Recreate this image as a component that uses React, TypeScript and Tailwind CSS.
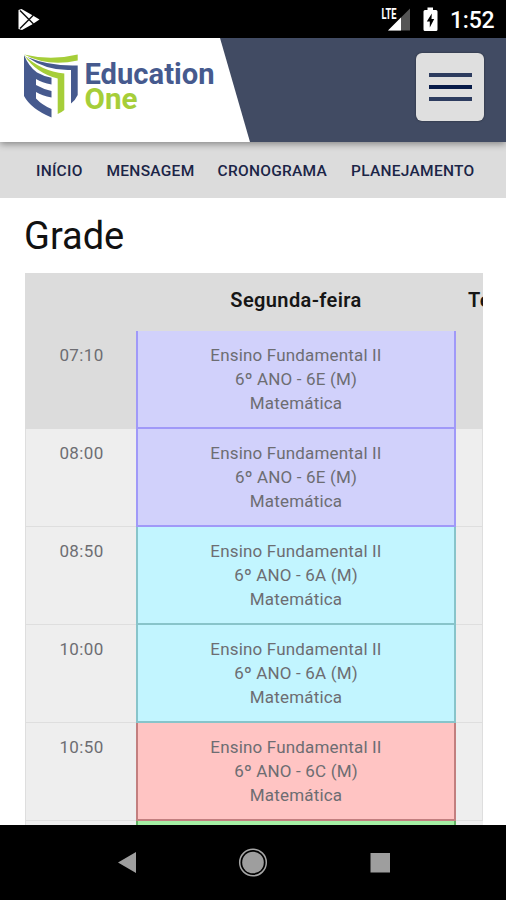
import React from "react";

type Lesson = { time: string; group: string; timeCell: string; cell: string };

const lessons: Lesson[] = [
  { time: "07:10", group: "6º ANO - 6E (M)", timeCell: "bg-[#dcdcdc] border-[#dcdcdc]", cell: "bg-[#d1d1fb] border-[#a099f8]" },
  { time: "08:00", group: "6º ANO - 6E (M)", timeCell: "bg-[#eeeeee] border-[#dedede]", cell: "bg-[#d1d1fb] border-[#a099f8]" },
  { time: "08:50", group: "6º ANO - 6A (M)", timeCell: "bg-[#eeeeee] border-[#dedede]", cell: "bg-[#c2f5ff] border-[#88c4ca]" },
  { time: "10:00", group: "6º ANO - 6A (M)", timeCell: "bg-[#eeeeee] border-[#dedede]", cell: "bg-[#c2f5ff] border-[#88c4ca]" },
  { time: "10:50", group: "6º ANO - 6C (M)", timeCell: "bg-[#eeeeee] border-[#dedede]", cell: "bg-[#ffc4c3] border-[#c27f7f]" },
];

function StatusBar() {
  return (
    <div className="flex h-[38px] items-center justify-between bg-black pr-[12px] pl-[17px]">
      <svg width="24" height="24" viewBox="0 0 24 24" className="mt-px">
        <path d="M1.5 2 L4.5 1 L15 7 L22.5 11.500 L15 16.500 L5 22 L1.5 21Z" fill="#fff" />
        <path d="M3 2.500 L16.500 16 M3 20.500 L16.500 7" stroke="#111" strokeWidth="1.5" />
      </svg>
      <div className="flex items-center">
        <svg width="30" height="26" viewBox="0 0 30 26" className="mt-px mr-[12px]">
          <path d="M7 23.5 L29 1.5 V23.5Z" fill="#555" />
          <path d="M7 23.5 L20 10.5 V23.5Z" fill="#fff" />
          <path d="M0 0 H16.500 V12.500 H0Z" fill="#000" />
          <text x="0.5" y="11.5" textLength="15" lengthAdjust="spacingAndGlyphs" fill="#fff" fontSize="14" fontWeight="700" fontFamily="Roboto, sans-serif">LTE</text>
        </svg>
        <svg width="15" height="25" viewBox="0 0 15 25" className="mt-px mr-[12px]">
          <path d="M4.5 0.5 H10 V3 H13 Q14.5 3 14.5 4.5 V22.5 Q14.5 24 13 24 H2 Q0.5 24 0.5 22.5 V4.5 Q0.5 3 2 3 H4.5Z" fill="#fff" />
          <path d="M8.8 6.5 L3.8 14.5 H6.8 V20.5 L11.2 12 H8.5Z" fill="#000" />
        </svg>
        <span className="mt-[3px] w-[44px] text-[23px] leading-[26px] font-medium tracking-[-0.2px] whitespace-nowrap text-white">1:52</span>
      </div>
    </div>
  );
}

function Logo() {
  return (
    <svg width="250" height="104" viewBox="0 38 250 104">
      <path d="M0 38 H220 L250 142 H0Z" fill="#fff" />
      <path d="M24 55 Q29 67 37 72.500 Q43 76 51.500 77.800 V84.500 Q42 82.500 36 79 V85 Q43 89 51.500 91 V97.500 Q42 95.500 36 92 V98.500 Q42 105 51.500 109 V117.500 Q31 109 24 96Z" fill="#465a8e" />
      <path d="M27 57 Q50 66.500 77.700 65.500 V95 Q75.500 100 71 103.500 V70 Q47 71 27 57Z" fill="#465a8e" />
      <path d="M24.500 55.500 Q41 71 64.300 73.500 V110 Q61.500 112.500 57.700 114 V78.500 Q36 73 24.500 55.500Z" fill="#a6ce39" />
      <path d="M24 54.500 Q51 61 77.700 54.500 V60.500 Q48 67 24 54.500Z" fill="#a6ce39" />
      <text x="84.500" y="84" textLength="130" lengthAdjust="spacingAndGlyphs" fontSize="30" fontWeight="700" fontFamily="Roboto, sans-serif" fill="#465a8e">Education</text>
      <text x="84.500" y="109.300" textLength="53" lengthAdjust="spacingAndGlyphs" fontSize="29.500" fontWeight="700" fontFamily="Roboto, sans-serif" fill="#a6ce39">One</text>
    </svg>
  );
}

function Header() {
  return (
    <header className="relative z-10 flex h-[104px] items-start justify-between bg-[#414b63] pr-[22px] shadow-[0_2px_7px_rgba(0,0,0,0.4)]">
      <Logo />
      <button className="mt-[15px] flex h-[68px] w-[68px] flex-col items-center justify-center gap-[8px] rounded-[6px] bg-[#dfdfdf] shadow-[0_0_2px_rgba(0,0,0,0.5)]">
        <span className="h-[4px] w-[43px] bg-[#2d3c5f]" />
        <span className="h-[4px] w-[43px] bg-[#071b49]" />
        <span className="h-[4px] w-[43px] bg-[#2d3c5f]" />
      </button>
    </header>
  );
}

function Nav() {
  return (
    <nav className="flex h-[56px] items-center bg-[#dcdcdc] pt-[3px] pl-[36px] text-[15.500px] font-medium tracking-[0.28px] whitespace-nowrap text-[#1b2547]">
      <span className="w-[70.500px]">INÍCIO</span>
      <span className="w-[111px]">MENSAGEM</span>
      <span className="w-[133.500px]">CRONOGRAMA</span>
      <span>PLANEJAMENTO</span>
    </nav>
  );
}

function Schedule() {
  return (
    <div className="mx-[25px] w-[458px] overflow-hidden bg-[#eee] text-[17px] text-[#6d6d72]">
      <div className="flex h-[58px] items-center bg-[#dcdcdc] text-[20px] font-semibold tracking-[0.38px] whitespace-nowrap text-[#161616]">
        <div className="w-[111px] shrink-0" />
        <div className="w-[320px] shrink-0 pb-[4px] text-center">Segunda-feira</div>
        <div className="pb-[4px] pl-[12px]">Terça-feira</div>
      </div>
      {lessons.map((l) => (
        <div key={l.time} className="flex h-[98px]">
          <div className={`w-[111px] shrink-0 border-b border-l pt-[12px] pl-px text-center leading-[24px] tracking-[0.35px] ${l.timeCell}`}>{l.time}</div>
          <div className={`w-[320px] shrink-0 border-x-2 border-b-2 pt-[12px] text-center leading-[24px] tracking-[0.17px] ${l.cell}`}>
            <div>Ensino Fundamental II</div>
            <div>{l.group}</div>
            <div>Matemática</div>
          </div>
          <div className={`grow border-r border-b ${l.timeCell}`} />
        </div>
      ))}
      <div className="flex h-[98px]">
        <div className="w-[111px] shrink-0 border-l border-[#dedede]" />
        <div className="w-[320px] shrink-0 border-x-2 border-[#65b365] bg-[#a4efa4]" />
      </div>
    </div>
  );
}

function NavigationBar() {
  return (
    <div className="flex h-[75px] shrink-0 items-center bg-black">
      <svg width="506" height="75" viewBox="0 825 506 75">
        <path d="M118 862.500 L136 852 V873Z M370.500 853 H390 V872.500 H370.500Z" fill="#9e9e9e" />
        <circle cx="253" cy="862.500" r="10.800" fill="#9e9e9e" />
        <circle cx="253" cy="862.500" r="13.300" fill="none" stroke="#a6a6a6" strokeWidth="1.500" />
      </svg>
    </div>
  );
}

export default function App() {
  return (
    <div className="flex h-[900px] w-[506px] flex-col overflow-hidden bg-white font-['Roboto',sans-serif]">
      <StatusBar />
      <Header />
      <Nav />
      <main className="min-h-0 flex-1 overflow-hidden">
        <h1 className="h-[75px] pt-[14px] pl-[24px] text-[38px] leading-[48px] text-[#111]">Grade</h1>
        <Schedule />
      </main>
      <NavigationBar />
    </div>
  );
}
